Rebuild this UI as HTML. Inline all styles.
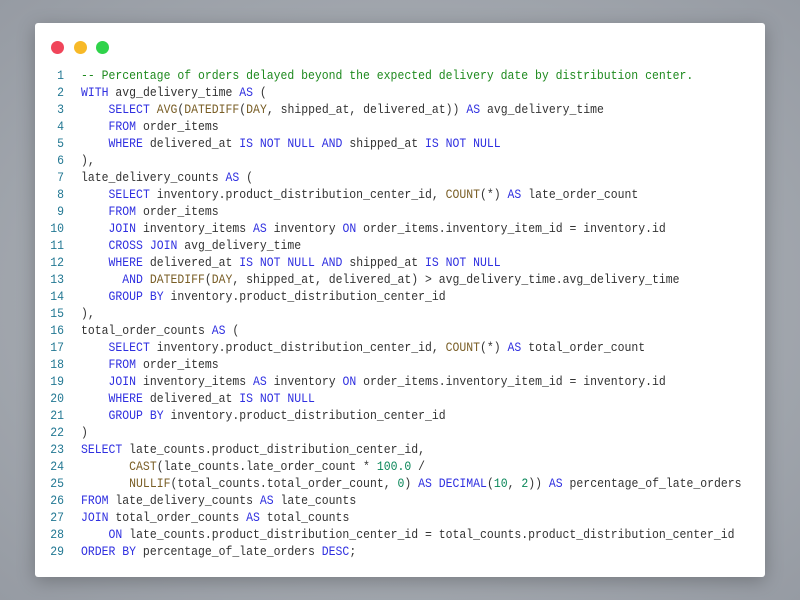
<!DOCTYPE html>
<html><head><style>
html,body{margin:0;padding:0;width:800px;height:600px;overflow:hidden;background:radial-gradient(ellipse at 50% 50%,#b4b8be 0%,#a3a8af 60%,#969ba3 100%);}
.card{position:absolute;left:35px;top:23px;width:730px;height:554px;background:#fff;border-radius:3px;box-shadow:0 4px 18px rgba(0,0,0,.25);overflow:hidden;}
.dot{position:absolute;top:18px;width:13px;height:13px;border-radius:50%;}
pre{position:absolute;left:0;top:45px;margin:0;font-family:"Liberation Mono",monospace;font-size:12.5px;line-height:17px;color:#333;transform:scaleX(0.917);transform-origin:0 0;}
.n{display:inline-block;width:31.6px;text-align:right;color:#237893;margin-right:18.6px;}
.k{color:#2f2fe0}.f{color:#795e26}.c{color:#1f8a1f}.d{color:#098658}
</style></head><body>
<div class="card">
<div class="dot" style="left:16px;background:#f0455a"></div>
<div class="dot" style="left:39px;background:#f7b928"></div>
<div class="dot" style="left:61px;background:#2fd34a"></div>
<pre><span class="n">1</span><span class="c">-- Percentage of orders delayed beyond the expected delivery date by distribution center.</span>
<span class="n">2</span><span class="k">WITH</span> avg_delivery_time <span class="k">AS</span> (
<span class="n">3</span>    <span class="k">SELECT</span> <span class="f">AVG</span>(<span class="f">DATEDIFF</span>(<span class="f">DAY</span>, shipped_at, delivered_at)) <span class="k">AS</span> avg_delivery_time
<span class="n">4</span>    <span class="k">FROM</span> order_items
<span class="n">5</span>    <span class="k">WHERE</span> delivered_at <span class="k">IS NOT NULL AND</span> shipped_at <span class="k">IS NOT NULL</span>
<span class="n">6</span>),
<span class="n">7</span>late_delivery_counts <span class="k">AS</span> (
<span class="n">8</span>    <span class="k">SELECT</span> inventory.product_distribution_center_id, <span class="f">COUNT</span>(*) <span class="k">AS</span> late_order_count
<span class="n">9</span>    <span class="k">FROM</span> order_items
<span class="n">10</span>    <span class="k">JOIN</span> inventory_items <span class="k">AS</span> inventory <span class="k">ON</span> order_items.inventory_item_id = inventory.id
<span class="n">11</span>    <span class="k">CROSS JOIN</span> avg_delivery_time
<span class="n">12</span>    <span class="k">WHERE</span> delivered_at <span class="k">IS NOT NULL AND</span> shipped_at <span class="k">IS NOT NULL</span>
<span class="n">13</span>      <span class="k">AND</span> <span class="f">DATEDIFF</span>(<span class="f">DAY</span>, shipped_at, delivered_at) &gt; avg_delivery_time.avg_delivery_time
<span class="n">14</span>    <span class="k">GROUP BY</span> inventory.product_distribution_center_id
<span class="n">15</span>),
<span class="n">16</span>total_order_counts <span class="k">AS</span> (
<span class="n">17</span>    <span class="k">SELECT</span> inventory.product_distribution_center_id, <span class="f">COUNT</span>(*) <span class="k">AS</span> total_order_count
<span class="n">18</span>    <span class="k">FROM</span> order_items
<span class="n">19</span>    <span class="k">JOIN</span> inventory_items <span class="k">AS</span> inventory <span class="k">ON</span> order_items.inventory_item_id = inventory.id
<span class="n">20</span>    <span class="k">WHERE</span> delivered_at <span class="k">IS NOT NULL</span>
<span class="n">21</span>    <span class="k">GROUP BY</span> inventory.product_distribution_center_id
<span class="n">22</span>)
<span class="n">23</span><span class="k">SELECT</span> late_counts.product_distribution_center_id,
<span class="n">24</span>       <span class="f">CAST</span>(late_counts.late_order_count * <span class="d">100.0</span> /
<span class="n">25</span>       <span class="f">NULLIF</span>(total_counts.total_order_count, <span class="d">0</span>) <span class="k">AS</span> <span class="k">DECIMAL</span>(<span class="d">10</span>, <span class="d">2</span>)) <span class="k">AS</span> percentage_of_late_orders
<span class="n">26</span><span class="k">FROM</span> late_delivery_counts <span class="k">AS</span> late_counts
<span class="n">27</span><span class="k">JOIN</span> total_order_counts <span class="k">AS</span> total_counts
<span class="n">28</span>    <span class="k">ON</span> late_counts.product_distribution_center_id = total_counts.product_distribution_center_id
<span class="n">29</span><span class="k">ORDER BY</span> percentage_of_late_orders <span class="k">DESC</span>;
</pre>
</div>
</body></html>
